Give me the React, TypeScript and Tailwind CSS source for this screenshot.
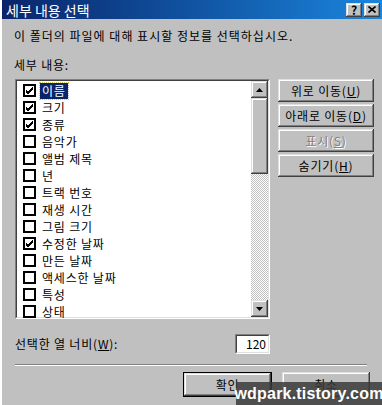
import React from "react";

const items: { label: string; checked: boolean }[] = [
  { label: "이름", checked: true },
  { label: "크기", checked: true },
  { label: "종류", checked: true },
  { label: "음악가", checked: false },
  { label: "앨범 제목", checked: false },
  { label: "년", checked: false },
  { label: "트랙 번호", checked: false },
  { label: "재생 시간", checked: false },
  { label: "그림 크기", checked: false },
  { label: "수정한 날짜", checked: true },
  { label: "만든 날짜", checked: false },
  { label: "액세스한 날짜", checked: false },
  { label: "특성", checked: false },
  { label: "상태", checked: false },
];

const raised =
  "shadow-[inset_-1px_-1px_#404040,inset_1px_1px_#dfdfdf,inset_-2px_-2px_#808080,inset_2px_2px_#ffffff]";

function CheckBox({ checked }: { checked: boolean }) {
  return (
    <div className="w-[13px] h-[13px] shrink-0 border-2 border-black bg-white flex items-center justify-center">
      {checked && (
        <svg width="9" height="9" viewBox="0 0 9 9">
          <path d="M1 4 L3 6 L8 1 M1 5 L3 7 L8 2 M1 6 L3 8 L8 3" stroke="#000" strokeWidth="1" fill="none" shapeRendering="crispEdges" />
        </svg>
      )}
    </div>
  );
}

function Arrow({ down }: { down?: boolean }) {
  return (
    <svg width="7" height="4" viewBox="0 0 7 4" className={down ? "rotate-180" : ""}>
      <path d="M3.5 0 L7 4 L0 4 Z" fill="#000" />
    </svg>
  );
}

function SideButton({ text, mn, disabled }: { text: string; mn: string; disabled?: boolean }) {
  return (
    <div
      className={`h-[23px] w-[96px] bg-[#c0c0c0] flex items-center justify-center text-[12px] tracking-[0.8px] ${raised} ${
        disabled ? "text-[#808080] [text-shadow:1px_1px_#fff]" : "text-black"
      }`}
    >
      {text}(<span className="underline">{mn}</span>)
    </div>
  );
}

export default function App() {
  return (
    <div
      className="relative w-[382px] h-[405px] overflow-hidden bg-[#c0c0c0] border-l-2 border-l-white text-black"
      style={{ fontFamily: '"Noto Sans CJK KR", "Liberation Sans", sans-serif' }}
    >
      {/* title bar */}
      <div className="h-[19px] flex items-center justify-between pl-[4px] pr-[2px] bg-gradient-to-r from-[#0a246a] to-[#1b86dd]">
        <span className="text-white text-[14px] leading-none">세부 내용 선택</span>
        <div className="flex gap-[2px]">
          <div className={`w-[16px] h-[14px] bg-[#c0c0c0] flex items-center justify-center text-[12px] font-bold leading-none ${raised}`}>?</div>
          <div className={`w-[16px] h-[14px] bg-[#c0c0c0] flex items-center justify-center ${raised}`}>
            <svg width="8" height="7" viewBox="0 0 8 7">
              <path d="M0.5 0.5 L7.5 6.5 M7.5 0.5 L0.5 6.5" stroke="#000" strokeWidth="1.6" />
            </svg>
          </div>
        </div>
      </div>

      <div className="pl-[12px] pt-[9px] text-[12px] leading-[16px] tracking-[1px]">이 폴더의 파일에 대해 표시할 정보를 선택하십시오.</div>
      <div className="pl-[12px] pt-[13px] text-[12px] leading-[16px] tracking-[0.8px]">세부 내용:</div>

      <div className="flex mt-[6px] pl-[13px]">
        {/* list box */}
        <div className="w-[255px] h-[240px] border border-t-[#808080] border-l-[#808080] border-r-white border-b-white">
          <div className="h-full border border-t-[#404040] border-l-[#404040] border-r-[#dfdfdf] border-b-[#dfdfdf] bg-white flex">
            <div className="flex-1 pt-[1px]">
              {items.map((it, i) => (
                <div key={it.label} className="h-[17px] flex items-center pl-[6px]">
                  <CheckBox checked={it.checked} />
                  <span
                    className={`ml-[4px] px-[2px] h-[16px] flex items-center text-[12px] leading-none tracking-[0.8px] ${
                      i === 0 ? "bg-[#0a246a] text-white outline-1 outline-dotted outline-[#d0c060]" : ""
                    }`}
                  >
                    {it.label}
                  </span>
                </div>
              ))}
            </div>
            {/* scrollbar */}
            <div className="w-[17px] flex flex-col">
              <div className={`h-[17px] bg-[#c0c0c0] flex items-center justify-center ${raised}`}>
                <Arrow />
              </div>
              <div className={`h-[76px] bg-[#c0c0c0] ${raised}`} />
              <div className="flex-1 bg-[repeating-conic-gradient(#c0c0c0_0_25%,#ffffff_0_50%)] bg-[length:2px_2px]" />
              <div className={`h-[17px] bg-[#c0c0c0] flex items-center justify-center ${raised}`}>
                <Arrow down />
              </div>
            </div>
          </div>
        </div>

        {/* side buttons */}
        <div className="ml-[8px] flex flex-col gap-[2px]">
          <SideButton text="위로 이동" mn="U" />
          <SideButton text="아래로 이동" mn="D" />
          <SideButton text="표시" mn="S" disabled />
          <SideButton text="숨기기" mn="H" />
        </div>
      </div>

      <div className="flex items-center mt-[15px] pl-[13px] w-[268px] justify-between">
        <span className="text-[12px] leading-[16px] tracking-[0.8px]">
          선택한 열 너비(<span className="underline">W</span>):
        </span>
        <div className="w-[35px] h-[20px] border border-t-[#808080] border-l-[#808080] border-r-white border-b-white">
          <div className="h-full border border-t-[#404040] border-l-[#404040] border-r-[#dfdfdf] border-b-[#dfdfdf] bg-white flex items-center justify-end pr-[2px] text-[12px] leading-none">
            120
          </div>
        </div>
      </div>

      <div className="ml-[13px] mt-[10px] w-[352px] h-[2px] border-t border-t-[#808080] border-b border-b-white" />

      <div className="flex justify-end gap-[10px] pr-[12px] mt-[6px]">
        <div className="w-[89px] h-[25px] border border-black">
          <div className={`h-full bg-[#c0c0c0] flex items-center justify-center text-[12px] tracking-[0.8px] ${raised}`}>확인</div>
        </div>
        <div className={`w-[88px] h-[25px] bg-[#c0c0c0] flex items-center justify-center text-[12px] tracking-[0.8px] ${raised}`}>취소</div>
      </div>

      {/* watermark */}
      <div className="absolute right-0 bottom-0 w-[146px] h-[23px] bg-[#3a3a3a]/85 flex items-center justify-center">
        <span className="text-white font-bold text-[16px] leading-none tracking-[0.2px]" style={{ fontFamily: '"Liberation Sans", sans-serif' }}>
          wdpark.tistory.com
        </span>
      </div>
    </div>
  );
}
